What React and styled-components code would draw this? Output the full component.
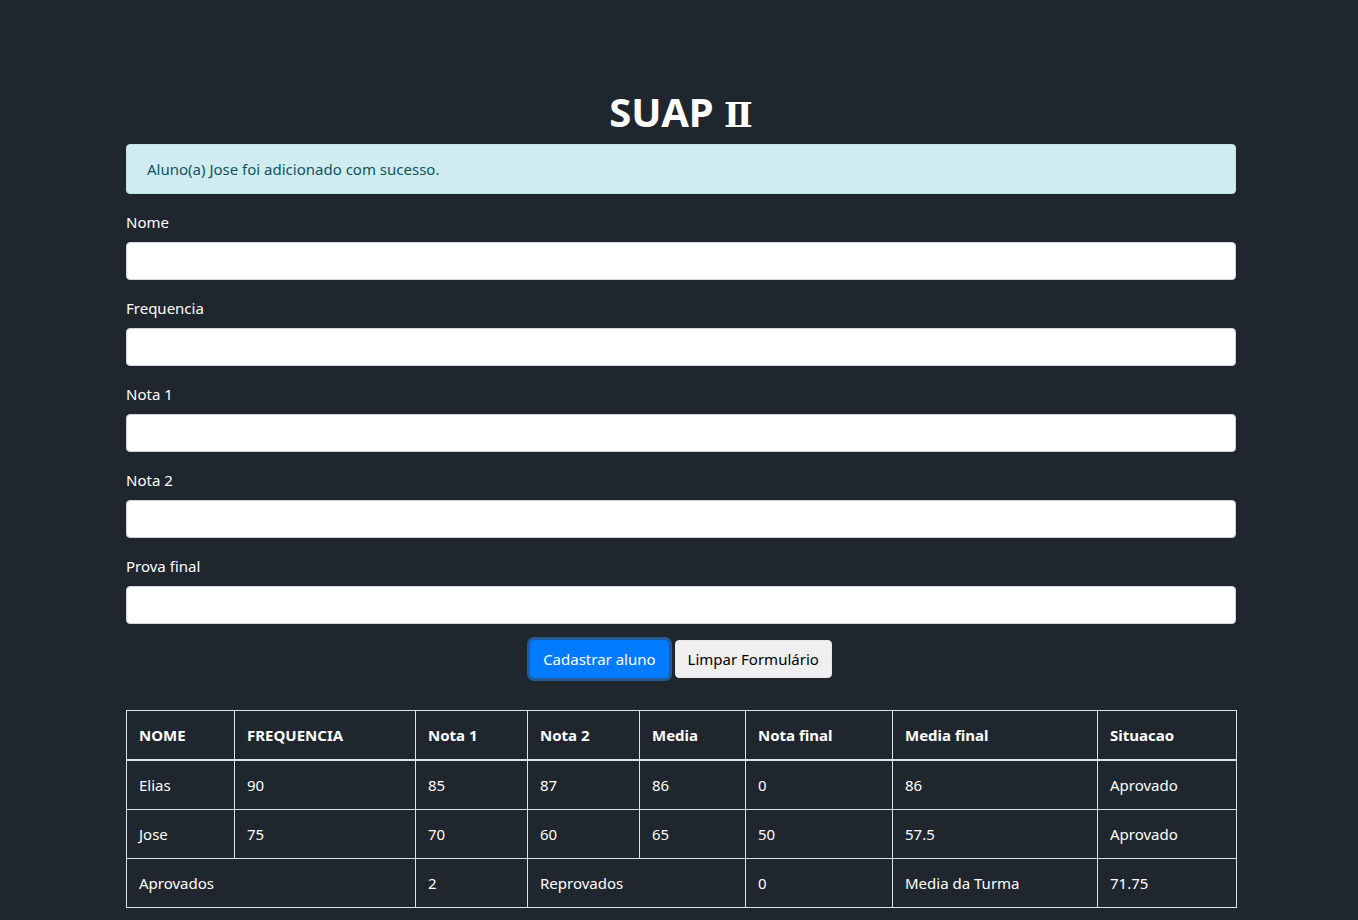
import React from 'react';
import styled, { createGlobalStyle } from 'styled-components';

const GlobalStyle = createGlobalStyle`
  * {
    box-sizing: border-box;
  }

  body {
    margin: 0;
    background: #20262e;
    color: #fff;
    font-family: "Segoe UI", "Noto Sans", "Open Sans", sans-serif;
    font-size: 15px;
    line-height: 24px;
  }
`;

const Container = styled.div`
  width: 1110px;
  margin: 0 auto;
  padding: 88px 0 12px;
  position: relative;
  left: 2px;
`;

const Title = styled.h1`
  margin: 0 0 8px;
  text-align: center;
  font-size: 40px;
  font-weight: 700;
  line-height: 48px;
`;

const Numeral = styled.span`
  font-family: "DejaVu Serif", "Liberation Serif", serif;
  font-weight: 700;
  font-size: 34px;
  line-height: 1;
`;

const Alert = styled.div`
  padding: 12px 20px;
  margin-bottom: 16px;
  border: 1px solid #bee5eb;
  border-radius: 4px;
  background: #d1ecf1;
  color: #0c5460;
`;

const FormGroup = styled.div`
  margin-bottom: 16px;
`;

const Label = styled.label`
  display: block;
  margin-bottom: 8px;
`;

const Input = styled.input`
  display: block;
  width: 100%;
  height: 38px;
  padding: 6px 12px;
  border: 1px solid #ced4da;
  border-radius: 4px;
  background: #fff;
  font: inherit;
  outline: none;
`;

const Actions = styled.div`
  display: flex;
  justify-content: center;
  gap: 6px;
`;

const Button = styled.button`
  height: 38px;
  padding: 6px 12px;
  border-radius: 4px;
  font-family: inherit;
  font-size: 15px;
  line-height: 24px;
  cursor: pointer;
  border: 1px solid ${p => (p.primary ? '#007bff' : '#e6e6e6')};
  background: ${p => (p.primary ? '#007bff' : '#efefef')};
  color: ${p => (p.primary ? '#fff' : '#000')};
  box-shadow: ${p => (p.primary ? '0 0 0 3px rgba(38, 143, 255, 0.5)' : 'none')};
`;

const Table = styled.table`
  width: 100%;
  margin-top: 32px;
  border-collapse: collapse;
  table-layout: fixed;
  color: #fff;
`;

const Th = styled.th`
  padding: 12px;
  text-align: left;
  font-weight: 700;
  border: 1px solid #dee2e6;
  border-bottom-width: 2px;
`;

const Td = styled.td`
  padding: 12px;
  border: 1px solid #dee2e6;
`;

const columns = [
  { label: 'NOME', width: 108 },
  { label: 'FREQUENCIA', width: 181 },
  { label: 'Nota 1', width: 112 },
  { label: 'Nota 2', width: 112 },
  { label: 'Media', width: 106 },
  { label: 'Nota final', width: 147 },
  { label: 'Media final', width: 205 },
  { label: 'Situacao', width: 139 },
];

const alunos = [
  ['Elias', '90', '85', '87', '86', '0', '86', 'Aprovado'],
  ['Jose', '75', '70', '60', '65', '50', '57.5', 'Aprovado'],
];

const campos = ['Nome', 'Frequencia', 'Nota 1', 'Nota 2', 'Prova final'];

const App = () => (
  <>
    <GlobalStyle />
    <Container>
      <Title>SUAP <Numeral>Ⅱ</Numeral></Title>
      <Alert>Aluno(a) Jose foi adicionado com sucesso.</Alert>
      {campos.map(campo => (
        <FormGroup key={campo}>
          <Label>{campo}</Label>
          <Input type="text" />
        </FormGroup>
      ))}
      <Actions>
        <Button primary>Cadastrar aluno</Button>
        <Button>Limpar Formulário</Button>
      </Actions>
      <Table>
        <colgroup>
          {columns.map(c => <col key={c.label} style={{ width: c.width }} />)}
        </colgroup>
        <thead>
          <tr>
            {columns.map(c => <Th key={c.label}>{c.label}</Th>)}
          </tr>
        </thead>
        <tbody>
          {alunos.map(linha => (
            <tr key={linha[0]}>
              {linha.map((valor, i) => <Td key={columns[i].label}>{valor}</Td>)}
            </tr>
          ))}
          <tr>
            <Td colSpan={2}>Aprovados</Td>
            <Td>2</Td>
            <Td colSpan={2}>Reprovados</Td>
            <Td>0</Td>
            <Td>Media da Turma</Td>
            <Td>71.75</Td>
          </tr>
        </tbody>
      </Table>
    </Container>
  </>
);

export default App;
